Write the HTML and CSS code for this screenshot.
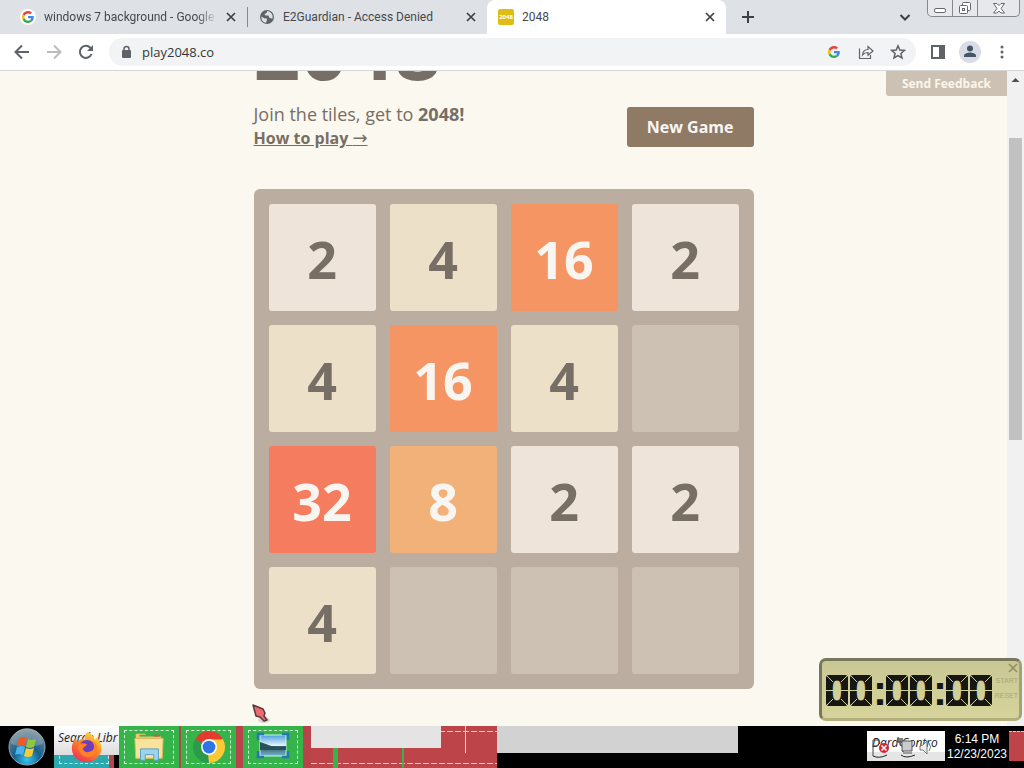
FILE: index.html
```html
<!DOCTYPE html>
<html lang="en">
<head>
<meta charset="utf-8">
<title>2048</title>
<link rel="stylesheet" href="styles.css">
</head>
<body>
<svg class="defs" aria-hidden="true">
  <symbol id="close" viewBox="0 0 10 10"><path d="M1 1 9 9M9 1 1 9" fill="none" stroke="#3c4043" stroke-width="1.7"/></symbol>
  <symbol id="google" viewBox="0 0 48 48">
    <path fill="#ea4335" d="M24 9.5c3.5 0 6.700 1.200 9.200 3.600l6.900-6.900C35.900 2.400 30.500 0 24 0 14.600 0 6.500 5.400 2.600 13.200l8 6.200C12.400 13.700 17.700 9.500 24 9.500z"/>
    <path fill="#4285f4" d="M47 24.500c0-1.600-.2-3.100-.4-4.500H24v9h12.900c-.6 3-2.200 5.500-4.800 7.200l7.700 6C44.400 38 47 31.800 47 24.500z"/>
    <path fill="#fbbc05" d="M10.500 28.600a14.500 14.500 0 0 1 0-9.200l-8-6.200a24 24 0 0 0 0 21.600z"/>
    <path fill="#34a853" d="M24 48c6.500 0 11.900-2.100 15.900-5.800l-7.700-6c-2.200 1.500-4.900 2.300-8.200 2.300-6.300 0-11.600-4.200-13.500-9.900l-8 6.200C6.500 42.600 14.600 48 24 48z"/>
  </symbol>
</svg>

<header class="browser">
  <div class="tabs">
    <div class="tab">
      <svg class="favicon" viewBox="0 0 16 16"><circle cx="8" cy="8" r="8" fill="#fff"/><use href="#google" x="2" y="2" width="12" height="12"/></svg>
      <span class="tab-title fade">windows 7 background - Google</span>
      <button class="tab-close" aria-label="Close tab"><svg><use href="#close"/></svg></button>
    </div>
    <div class="tab">
      <svg class="favicon" viewBox="0 0 16 16"><circle cx="8" cy="8" r="7" fill="#5f6368"/><path d="M2.500 7.500 5.500 9.500 7.500 9.200 8 11 7 13.700C4 13.500 2 11 2.500 7.500zM8.500 2 7.500 4 5.500 5 6.500 6.500 9.500 6.500 10.500 9 13.500 9.500C14.500 6 12 2.500 8.500 2z" fill="#dee1e6"/></svg>
      <span class="tab-title">E2Guardian - Access Denied</span>
      <button class="tab-close" aria-label="Close tab"><svg><use href="#close"/></svg></button>
    </div>
    <div class="tab active">
      <span class="favicon logo">2048</span>
      <span class="tab-title">2048</span>
      <button class="tab-close" aria-label="Close tab"><svg><use href="#close"/></svg></button>
    </div>
    <button class="new-tab" aria-label="New tab"><svg viewBox="0 0 12 12"><path d="M6 0v12M0 6h12" stroke="#3c4043" stroke-width="2"/></svg></button>
    <button class="tab-search" aria-label="Search tabs"><svg viewBox="0 0 12 12"><path d="M1.500 4 6 8.500 10.500 4" fill="none" stroke="#3c4043" stroke-width="2"/></svg></button>
    <div class="window-buttons">
      <button aria-label="Minimize"><svg viewBox="0 0 14 14"><rect x="1.500" y="7.500" width="11" height="4" rx="1.500" fill="#fff" stroke="#63686e"/></svg></button>
      <button aria-label="Restore"><svg viewBox="0 0 14 14"><rect x="4.500" y="1.500" width="8" height="8" rx="1" fill="#fff" stroke="#63686e"/><rect x="1.500" y="4.500" width="8" height="8" rx="1" fill="#fff" stroke="#63686e"/><rect x="4.500" y="7.500" width="2" height="2" fill="none" stroke="#63686e"/></svg></button>
      <button class="wide" aria-label="Close"><svg viewBox="0 0 14 14"><path d="M1.500 2.500h3.500l2 2 2-2h3.500L9 7.500l3.500 4.500H9l-2-2-2 2H1.500L5 7.500z" fill="#fff" stroke="#63686e"/></svg></button>
    </div>
  </div>
  <div class="toolbar">
    <button class="tool" aria-label="Back"><svg viewBox="0 0 16 16"><path d="M15 8H2M8 1.500 1.500 8 8 14.500" fill="none" stroke="#5f6368" stroke-width="2"/></svg></button>
    <button class="tool" aria-label="Forward"><svg viewBox="0 0 16 16"><path d="M1 8h13M8 1.500 14.500 8 8 14.500" fill="none" stroke="#babcbe" stroke-width="2"/></svg></button>
    <button class="tool" aria-label="Reload"><svg viewBox="0 0 16 16"><path d="M13.500 10A6 6 0 1 1 12.300 3.800L14 5.500" fill="none" stroke="#5f6368" stroke-width="2"/><path d="M15 1v6H9z" fill="#5f6368"/></svg></button>
    <div class="address">
      <svg class="lock" viewBox="0 0 12 14"><rect x="2" y="5" width="9" height="8" rx="1" fill="#5f6368"/><path d="M4 6V4a2.500 2.500 0 0 1 5 0v2" fill="none" stroke="#5f6368" stroke-width="1.500"/></svg>
      <input type="text" aria-label="Address" value="play2048.co">
      <button class="tool" aria-label="Google"><svg viewBox="0 0 16 16"><use href="#google" x="2" y="2" width="12" height="12"/></svg></button>
      <button class="tool" aria-label="Share"><svg viewBox="0 0 16 16"><path d="M1.500 4.500v10h11V11M4.500 11c.3-4 2.500-5.500 5.500-5.500V2.500L15 7l-5 4.300V8.500C7.500 8.500 6 9 4.500 11z" fill="none" stroke="#5f6368" stroke-width="1.200"/></svg></button>
      <button class="tool" aria-label="Bookmark"><svg viewBox="0 0 16 16"><path d="M8 1.800 9.800 6l4.600.4-3.500 3 1.100 4.500L8 11.500 4 13.900l1.100-4.500-3.500-3L6.200 6z" fill="none" stroke="#5f6368" stroke-width="1.500"/></svg></button>
    </div>
    <button class="tool" aria-label="Side panel"><svg viewBox="0 0 16 16"><path d="M2 2h12v12H2z" fill="none" stroke="#5f6368" stroke-width="2"/><path d="M9 2h5v12H9z" fill="#5f6368"/></svg></button>
    <button class="tool avatar" aria-label="Profile"><svg viewBox="0 0 22 22"><circle cx="11" cy="11" r="11" fill="#dadce3"/><circle cx="11" cy="7.500" r="3" fill="#44546a"/><path d="M5 16v-1.500c0-2 4-3 6-3s6 1 6 3V16z" fill="#44546a"/></svg></button>
    <button class="tool" aria-label="Menu"><svg viewBox="0 0 16 16" fill="#5f6368"><circle cx="8" cy="3" r="1.500"/><circle cx="8" cy="8" r="1.500"/><circle cx="8" cy="13" r="1.500"/></svg></button>
  </div>
</header>

<div class="viewport">
  <main class="page">
    <button class="feedback">Send Feedback</button>
    <div class="game">
      <div class="heading"><h1>2048</h1></div>
      <div class="intro">
        <p>Join the tiles, get to <strong>2048!</strong><br><a href="#how">How to play <span class="arrow">→</span></a></p>
        <button class="new-game">New Game</button>
      </div>
      <div class="board">
        <div class="tile t2">2</div><div class="tile t4">4</div><div class="tile t16">16</div><div class="tile t2">2</div>
        <div class="tile t4">4</div><div class="tile t16">16</div><div class="tile t4">4</div><div class="tile"></div>
        <div class="tile t32">32</div><div class="tile t8">8</div><div class="tile t2">2</div><div class="tile t2">2</div>
        <div class="tile t4">4</div><div class="tile"></div><div class="tile"></div><div class="tile"></div>
      </div>
    </div>
  </main>
  <div class="scrollbar">
    <svg viewBox="0 0 17 17"><path d="M4.500 11 8.500 7l4 4z" fill="#505050"/></svg>
    <div class="thumb"></div>
  </div>

  <svg class="cursor" viewBox="0 0 20 22"><ellipse cx="13" cy="17" rx="6" ry="3" fill="#00000022"/><path d="M2 2 12 6 14 10 13 13 16 17 13 18 9 14 5 13z" fill="#ec6a70" stroke="#5b3a3c" stroke-width="1.500" stroke-linejoin="round"/></svg>

  <section class="timer" aria-label="Stopwatch">
    <div class="digits"><i>0</i><i>0</i><b>:</b><i>0</i><i>0</i><b>:</b><i>0</i><i>0</i></div>
    <div class="timer-buttons">
      <button aria-label="Close stopwatch"><svg viewBox="0 0 10 10"><path d="M1 1 9 9M9 1 1 9" stroke="#8d8d63" stroke-width="1.500"/></svg></button>
      <button>START</button>
      <button>RESET</button>
    </div>
  </section>
</div>

<footer class="taskbar">
  <button class="start" aria-label="Start"><svg viewBox="0 0 40 40">
    <defs><radialGradient id="orb" cx=".5" cy=".85" r=".8"><stop offset="0" stop-color="#35c6f2"/><stop offset=".45" stop-color="#17618f"/><stop offset="1" stop-color="#6f8590"/></radialGradient></defs>
    <circle cx="20" cy="20" r="18" fill="url(#orb)" stroke="#91a9b5"/>
    <path d="M4 17a16 16 0 0 1 32 0q-16 6-32 0z" fill="#fff" opacity=".2"/>
    <path d="M12 11q4-2 8 0l-2 8q-4-2-8 0z" fill="#ed5b27"/><path d="M21 12q4 2 8 0l-2 8q-4 2-8 0z" fill="#91c73e"/><path d="M10 20q4-2 8 0l-2 8q-4-2-8 0z" fill="#4bb3ea"/><path d="M19 21q4 2 8 0l-2 8q-4 2-8 0z" fill="#fdcb2e"/>
  </svg></button>
  <button class="app library" aria-label="Firefox">
    <span class="label">Search Libr</span>
    <svg class="firefox" viewBox="0 0 32 32"><defs><linearGradient id="fox" x1=".8" y1="0" x2=".2" y2="1"><stop offset="0" stop-color="#ffe34a"/><stop offset=".4" stop-color="#ff9224"/><stop offset="1" stop-color="#f12b55"/></linearGradient></defs>
      <path d="M17 1c4 2 6 5 7 8l2-3c4 5 6 12 3 17-6 11-20 10-26 2C-1 18 1 11 5 7l1 4 4-3c2 0 3 0 4 1-1-3 0-6 3-8z" fill="url(#fox)"/><circle cx="16" cy="17" r="8" fill="#6e3bc5"/><path d="M7 14c3-3 6-1 9-1-1 3-4 3-4 5 1 4 6 4 10 1 2-3 1-7-2-9 6 1 8 7 5 12-5 7-18 5-18-8z" fill="#ff8126"/></svg>
  </button>
  <button class="app" aria-label="File Explorer"><svg viewBox="0 0 36 34"><path d="M4 7V3h10l2 3h15v23H4z" fill="#ebc66b"/><path d="M3 8h30l-1 21H4z" fill="#f9e29c" stroke="#dbb75c"/><path d="M8 4h8v2H8z" fill="#50a95a"/><path d="M23 4h6v2h-6z" fill="#dd5145"/><path d="M9 31V19h19v12h-5v-6h-9v6z" fill="#9cd4ed" stroke="#559fc4"/></svg></button>
  <button class="app" aria-label="Chrome"><svg viewBox="0 0 32 32"><path d="M16 16 3 8.500a15 15 0 0 1 26 0z" fill="#e33b2e"/><path d="M16 16 29 8.500A15 15 0 0 1 16 31z" fill="#fcc934"/><path d="M16 16v15A15 15 0 0 1 3 8.500z" fill="#299b4b"/><path d="M16 9h13.300L22 20 16 31l-1-9z" fill="#fcc934"/><circle cx="16" cy="16" r="7.500" fill="#fff"/><circle cx="16" cy="16" r="6" fill="#2b75e8"/></svg></button>
  <button class="app" aria-label="Pictures"><svg viewBox="0 0 34 32"><defs><linearGradient id="sky" x2="0" y2="1"><stop offset="0" stop-color="#4a9bde"/><stop offset=".5" stop-color="#e5f6fb"/><stop offset=".55" stop-color="#2d5963"/><stop offset="1" stop-color="#75b7cd"/></linearGradient></defs><path d="M4 4h26v21H4z" fill="url(#sky)" stroke="#d1eefc"/><path d="M4 11q6 2 14 5 7 1 12-1v4H4z" fill="#28515a"/><path d="M2 9V3h6M26 3h6v6M2 20v6h6M26 26h6v-6" fill="none" stroke="#2776b8" stroke-width="2.500"/></svg></button>
  <div class="red-strip"><span class="blank"></span><span class="rule"></span></div>
  <div class="grey-strip"></div>
  <div class="tray">
    <span class="tray-label">Dard Contro</span>
    <svg class="tray-icons" viewBox="0 0 66 24"><path d="M6 5v16M6 5h5l2 3-3 3H7" fill="none" stroke="#444"/><circle cx="17" cy="13" r="5" fill="#dc2431"/><path d="m14.500 10.500 5 5m0-5-5 5" stroke="#fff" stroke-width="1.500"/><path d="M33 3v5q0 3 3 3v6M31 3v4h4V3" fill="none" stroke="#555" stroke-width="1.500"/><path d="M35 6h10v10H35z" fill="#ccc" stroke="#555"/><path d="M36 18h9" stroke="#555"/><path d="m53 11 3-1 4-4v13l-4-4h-3z" fill="#eee" stroke="#777"/><path d="M62 8q3 4 0 8" fill="none" stroke="#777"/><path d="M6 21q6 3 14-1M34 20q5 4 14 0" fill="none" stroke="#222"/></svg>
  </div>
  <div class="clock"><time>6:14 PM</time><time>12/23/2023</time></div>
  <button class="show-desktop" aria-label="Show desktop"></button>
</footer>
</body>
</html>
```
FILE: styles.css
```css
* { box-sizing: border-box; }
body {
  margin: 0;
  height: 100vh;
  display: flex;
  flex-direction: column;
  overflow: hidden;
  font: 12px/16px "Open Sans", sans-serif;
  background: #fbf8ef;
}
button { border: 0; padding: 0; margin: 0; background: none; font: inherit; color: inherit; }
svg { display: block; }
.defs { position: absolute; width: 0; height: 0; }

/* Browser frame */
.browser { flex: none; background: #dee1e6; border-bottom: 1px solid #d5d6d8; }
.tabs { display: flex; height: 34px; }
.tab { flex: 0 1 239px; min-width: 0; display: flex; align-items: center; gap: 8px; padding: 0 11px; color: #45494d; }
.tab:first-child { flex-basis: 248px; padding-left: 20px; border-right: 1px solid; border-image: linear-gradient(transparent 8px, #85888c 8px 26px, transparent 26px) 1; }
.tab.active { background: #fff; border-radius: 8px 8px 0 0; }
.favicon { flex: none; width: 16px; height: 16px; }
.logo { border-radius: 2px; background: #e0bd16; color: #fff; font-size: 6px; font-weight: 700; text-align: center; }
.tab-title { flex: 1; overflow: hidden; white-space: nowrap; font-family: Roboto, sans-serif; }
.fade { mask-image: linear-gradient(to right, #000 88%, transparent); }
.tab-close svg { width: 10px; height: 10px; }
.new-tab { width: 44px; display: grid; place-items: center; }
.new-tab svg { width: 12px; height: 12px; }
.tab-search { margin-left: auto; padding: 0 16px; }
.tab-search svg { width: 12px; height: 12px; }
.window-buttons { display: flex; height: 17px; margin-right: 4px; border: 1px solid #85898f; border-top: 0; border-radius: 0 0 5px 5px; background: #e6e8eb; }
.window-buttons button { width: 25px; display: grid; place-items: center; border-right: 1px solid #85898f; }
.window-buttons .wide { width: 41px; border-right: 0; }
.window-buttons svg { width: 14px; height: 14px; }
.toolbar { display: flex; align-items: center; height: 36px; padding: 0 6px; background: #fff; }
.tool { flex: none; width: 32px; height: 28px; display: grid; place-items: center; }
.tool svg { width: 16px; height: 16px; }
.tool.avatar svg { width: 22px; height: 22px; }
.address { flex: 1; min-width: 0; height: 28px; margin: 0 6px 0 7px; padding: 0 2px 0 11px; display: flex; align-items: center; border-radius: 14px; background: #f1f3f4; }
.lock { width: 12px; height: 14px; }
.address input { flex: 1; min-width: 0; margin: 0; padding: 0 10px; border: 0; outline: 0; background: none; color: #34373a; font: 13px/20px "Open Sans", sans-serif; }

/* Page */
.viewport { position: relative; flex: 1; min-height: 0; display: flex; }
.page { position: relative; flex: 1; min-width: 0; overflow: hidden; color: #776e65; }
.feedback { position: absolute; top: 0; right: 0; padding: 5px 16px 4px; background: #cdc1b4; color: #fbf5ea; border-radius: 0 0 0 3px; font-weight: 700; }
.game { width: 500px; max-width: 100%; margin: 0 auto; }
.heading { height: 10px; display: flex; align-items: flex-end; overflow: hidden; }
h1 { margin: 0 0 -15px; font-size: 82px; line-height: 96px; }
.intro { display: flex; align-items: flex-start; justify-content: space-between; padding: 22px 0 39px; font-size: 18px; line-height: 23px; }
.intro p { margin: 0; }
.intro a { color: inherit; font-size: 16px; font-weight: 700; }
.arrow { font-family: "DejaVu Sans", sans-serif; font-weight: 400; font-size: 18px; line-height: 16px; }
.new-game { margin-top: 4px; height: 40px; padding: 0 20px; border-radius: 3px; background: #8f7a66; color: #f9f6f2; font-size: 16px; font-weight: 700; }
.board { display: grid; grid-template-columns: repeat(4, 1fr); gap: 14px; padding: 15px; border-radius: 6px; background: #bbada0; }
.tile { aspect-ratio: 1; display: grid; place-items: center; padding-top: 2px; border-radius: 3px; background: #cdc1b4; color: #776e65; font-size: 52px; line-height: 64px; font-weight: 700; }
.t2 { background: #eee4da; }
.t4 { background: #ede0c8; }
.t8 { background: #f2b179; color: #f9f6f2; }
.t16 { background: #f59563; color: #f9f6f2; }
.t32 { background: #f67c5f; color: #f9f6f2; }
.scrollbar { flex: none; width: 17px; background: #f1f1f1; }
.scrollbar svg { width: 17px; height: 17px; }
.thumb { height: 302px; margin: 50px 2px 0; background: #c1c1c1; }
.cursor { position: absolute; left: 251px; bottom: 1px; width: 20px; height: 22px; }

/* Stopwatch gadget */
.timer { position: absolute; right: 2px; bottom: 5px; display: flex; align-items: center; width: 203px; height: 63px; padding: 2px 1px 0 3px; border: 3px solid #77775c; border-right-color: #a2a274; border-bottom-color: #b3b07c; border-radius: 7px; background: linear-gradient(#c9c795, #d6d49b); }
.digits { display: flex; flex: 1; font: 700 42px/36px "Liberation Sans", Arial, sans-serif; color: #161712; }
.digits i { position: relative; width: 24px; text-align: center; font-style: normal; }
.digits i::before { content: ""; position: absolute; inset: 2px 1px 3px; border: 5px solid #161712; border-radius: 3px; }
.digits i::after {
  content: "";
  position: absolute;
  inset: 2px 1px 3px;
  background:
    linear-gradient(#d1cf98, #d1cf98) center / 100% 1px,
    linear-gradient(45deg, transparent 45%, #d1cf98 45% 55%, transparent 55%) left top / 7px 7px,
    linear-gradient(45deg, transparent 45%, #d1cf98 45% 55%, transparent 55%) right bottom / 7px 7px,
    linear-gradient(-45deg, transparent 45%, #d1cf98 45% 55%, transparent 55%) right top / 7px 7px,
    linear-gradient(-45deg, transparent 45%, #d1cf98 45% 55%, transparent 55%) left bottom / 7px 7px;
  background-repeat: no-repeat;
}
.digits b { width: 12px; text-align: center; }
.timer-buttons { align-self: stretch; display: flex; flex-direction: column; align-items: flex-end; color: #aaa875; font: 7px/15px "Liberation Sans", Arial, sans-serif; }
.timer-buttons svg { width: 10px; height: 10px; }

/* Taskbar */
.taskbar { flex: none; display: flex; height: 42px; background: #000; }
.start { width: 54px; display: grid; place-items: center; }
.start svg { width: 40px; height: 40px; }
.app { position: relative; flex: none; width: 62px; display: grid; place-items: center; border-right: 2px solid #b9434a; background: #35b44a; }
.app:nth-child(4) { border-right-width: 7px; }
.app:nth-child(5) { width: 68px; border-right-width: 8px; }
.app::before { content: ""; position: absolute; inset: 4px 5px; border: 1px dashed #d8f2da; }
.app svg { position: relative; width: 34px; height: 34px; }
.library { width: 65px; border-right: 5px solid #000; background: linear-gradient(to right, #2ba9ae 55px, #b9434a 55px); }
.library .label { position: absolute; top: 0; left: 0; width: 65px; height: 29px; padding: 4px 0 0 4px; overflow: hidden; white-space: nowrap; text-align: left; font-style: italic; background: linear-gradient(#fff, #ddd); color: #222; }
.app.library .firefox { width: 32px; height: 32px; margin-left: 6px; }
.red-strip { flex: none; width: 186px; display: flex; justify-content: space-between; padding-right: 31px; background: linear-gradient(#35b44a, #35b44a) 22px 0 / 5px 100% no-repeat, linear-gradient(#35b44a, #35b44a) 91px 0 / 2px 100% no-repeat, repeating-linear-gradient(to right, #f0c7c8 0 6px, transparent 6px 8px) 0 5px / 100% 1px no-repeat, repeating-linear-gradient(to right, #f0c7c8 0 6px, transparent 6px 8px) 0 37px / 100% 1px no-repeat, #bd4449; }
.blank { width: 130px; height: 22px; background: #e5e3e3; }
.rule { width: 1px; height: 27px; background: #efd4d5; }
.grey-strip { flex: 0 1 241px; height: 27px; background: #d2d2d2; }
.tray { position: relative; width: 78px; height: 30px; margin: 5px 0 0 auto; overflow: hidden; background: linear-gradient(#fff 70%, #e5e5e5 70%); }
.tray-label { position: absolute; top: 4px; left: 5px; white-space: nowrap; font-style: italic; color: #222; }
.tray-icons { position: relative; width: 66px; height: 24px; margin-top: 4px; }
.clock { width: 64px; display: flex; flex-direction: column; justify-content: center; align-items: center; color: #fff; font: 12px/15px "Liberation Sans", Arial, sans-serif; white-space: nowrap; }
.show-desktop { width: 15px; height: 30px; margin-top: 5px; border-top: 1px dashed #efc2c4; background: #bd4449; }
```
